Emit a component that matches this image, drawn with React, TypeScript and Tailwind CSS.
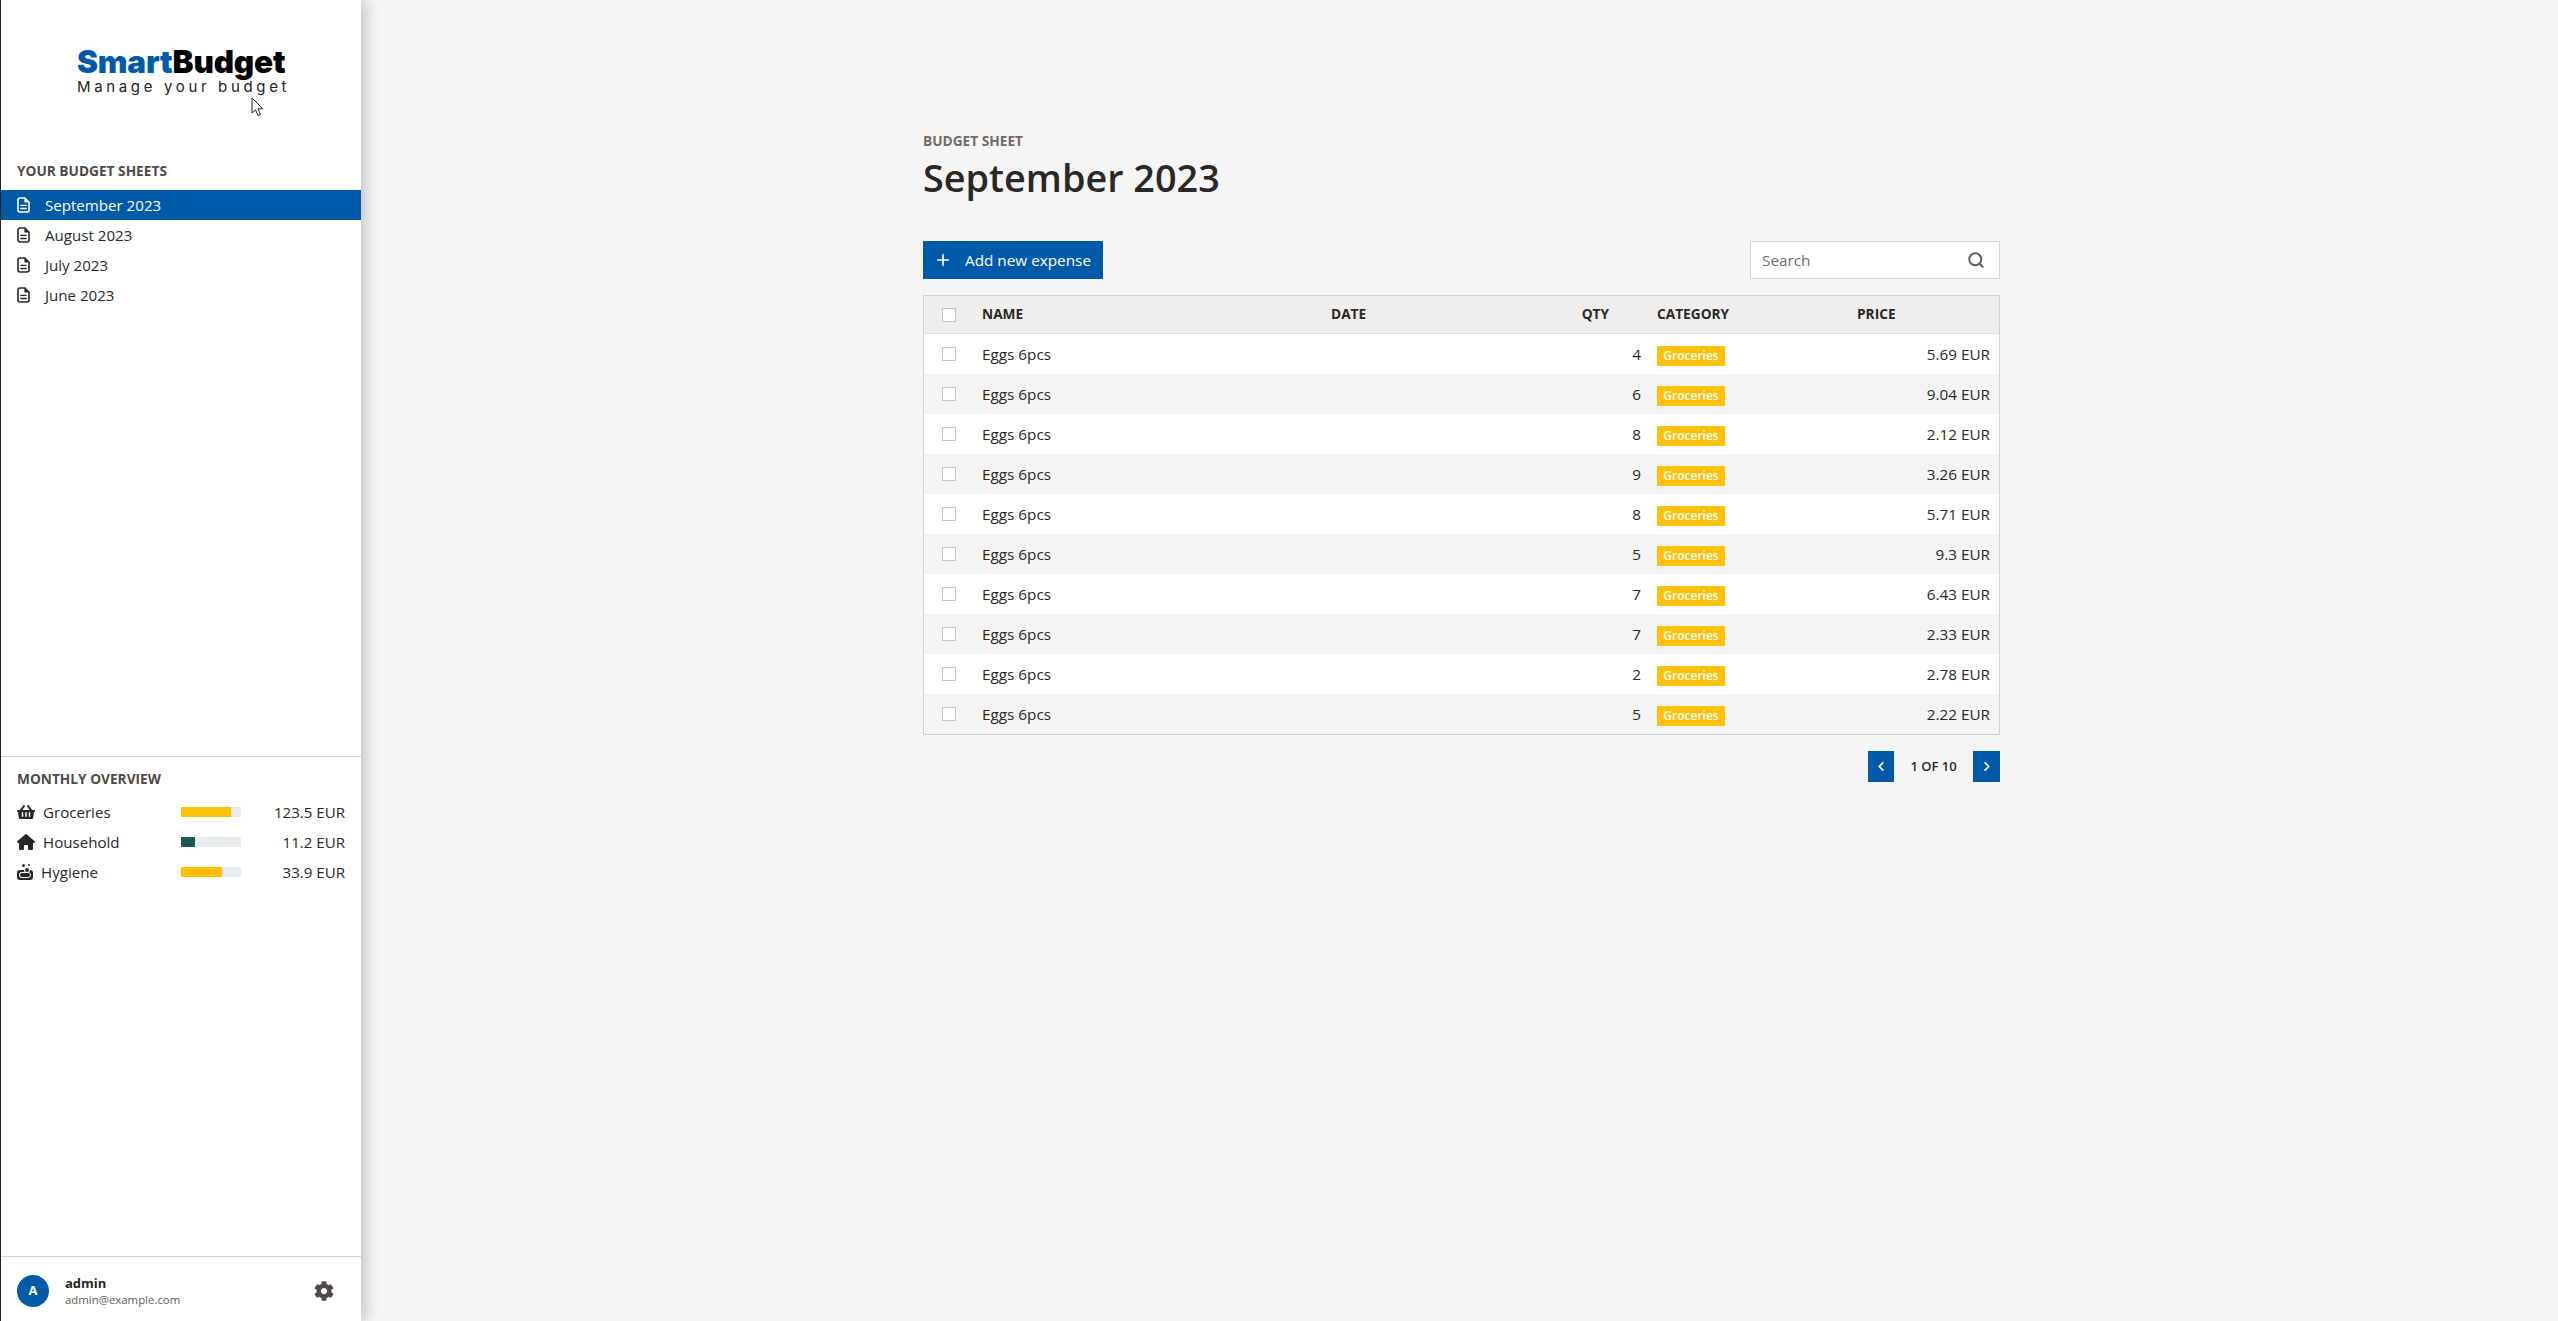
import React from "react";
import { FaShoppingBasket, FaSoap, FaCog, FaChevronLeft, FaChevronRight } from "react-icons/fa";
import { FaHouse } from "react-icons/fa6";
import { Search, Plus } from "lucide-react";

const sheets = ["September 2023", "August 2023", "July 2023", "June 2023"];
const overview = [
  { icon: <FaShoppingBasket className="w-[18px] h-[16px]" />, label: "Groceries", gap: "ml-[8px]", pct: 83, color: "bg-[#ffc107]", value: "123.5 EUR" },
  { icon: <FaHouse className="w-[18px] h-[16px]" />, label: "Household", gap: "ml-[8px]", pct: 23, color: "bg-[#1f5753]", value: "11.2 EUR" },
  { icon: <FaSoap className="w-[16px] h-[16px]" />, label: "Hygiene", gap: "ml-[8px]", pct: 68, color: "bg-[#ffc107]", value: "33.9 EUR" },
];
const rows: [number, string][] = [
  [4, "5.69 EUR"], [6, "9.04 EUR"], [8, "2.12 EUR"], [9, "3.26 EUR"], [8, "5.71 EUR"],
  [5, "9.3 EUR"], [7, "6.43 EUR"], [7, "2.33 EUR"], [2, "2.78 EUR"], [5, "2.22 EUR"],
];
const cols = "grid grid-cols-[58px_349px_200px_126px_200px_1fr] items-center";
const font = { fontFamily: '"Open Sans", "Noto Sans", sans-serif' };

function Box() {
  return <span className="block w-[14px] h-[14px] border border-[#c8c6c4] bg-white" />;
}

function DocIcon() {
  return (
    <svg className="mr-[15px] shrink-0" width="13" height="16" viewBox="0 0 13 16" fill="none" stroke="currentColor" strokeWidth="1.6" strokeLinejoin="round" strokeLinecap="round">
      <path d="M3 1 H7.8 L12 5.2 V13 A2 2 0 0 1 10 15 H3 A2 2 0 0 1 1 13 V3 A2 2 0 0 1 3 1 Z" />
      <path d="M8 1.2 V5 H11.8" fill="currentColor" strokeWidth="1.2" />
      <path d="M3.8 8.3 H9.2 M3.8 11.5 H9.2" strokeWidth="1.3" />
    </svg>
  );
}

export default function App() {
  return (
    <div className="flex w-full h-[1321px] bg-[#f5f5f5] text-[#292827] overflow-hidden relative" style={font}>
      <aside className="w-[361px] shrink-0 h-full flex flex-col bg-white border-l border-l-[#222] shadow-[4px_0_14px_rgba(0,0,0,0.22)] z-10">
        <div className="h-[156px] pt-[46px] pl-[76px] shrink-0">
          <div className="text-[31.5px] leading-[32px] font-black tracking-[-0.2px] text-black" style={{ fontFamily: "Inter, sans-serif" }}>
            <span className="text-[#005aa7]">Smart</span>Budget
          </div>
          <div className="text-[15px] leading-[18px] tracking-[3.65px] text-[#222]" style={{ fontFamily: "Inter, sans-serif" }}>
            Manage your budget
          </div>
        </div>
        <h2 className="h-[34px] pl-[16px] text-[13.7px] leading-[30px] font-bold text-[#4f4a47]">YOUR BUDGET SHEETS</h2>
        <ul className="flex-1">
          {sheets.map((s, i) => (
            <li key={s} className={`h-[30px] flex items-center pl-[16px] text-[15.1px] ${i === 0 ? "bg-[#005aa7] text-white" : "text-[#292827]"}`}>
              <DocIcon />
              {s}
            </li>
          ))}
        </ul>
        <section className="h-[500px] shrink-0 border-t border-[#d2d2d2] pt-[10px] px-[16px]">
          <h2 className="h-[30px] text-[13.7px] leading-[24px] font-bold text-[#4f4a47]">MONTHLY OVERVIEW</h2>
          {overview.map((o) => (
            <div key={o.label} className="h-[30px] flex items-center text-[15.1px]">
              <div className="w-[164px] flex items-center">
                {o.icon}
                <span className={o.gap}>{o.label}</span>
              </div>
              <div className="w-[60px] h-[10px] bg-[#e9ecef]">
                <div className={`h-full ${o.color}`} style={{ width: `${o.pct}%` }} />
              </div>
              <span className="flex-1 text-right">{o.value}</span>
            </div>
          ))}
        </section>
        <footer className="h-[65px] shrink-0 border-t border-[#d2d2d2] flex items-center pl-[16px] pr-[27px] pt-[3px]">
          <div className="w-[32px] h-[32px] rounded-full bg-[#005aa7] text-white flex items-center justify-center text-[13px] font-bold">A</div>
          <div className="ml-[16px] flex-1 flex flex-col">
            <span className="text-[13px] leading-[18px] font-bold">admin</span>
            <span className="text-[11.4px] leading-[16px] text-[#5f5a57]">admin@example.com</span>
          </div>
          <FaCog className="w-[20px] h-[20px] text-[#4f4a47]" />
        </footer>
      </aside>
      <main className="flex-1 pl-[562px] pt-[132px]">
        <div className="w-[1077px]">
          <div className="text-[13.7px] leading-[17px] font-bold text-[#6f6a67]">BUDGET SHEET</div>
          <h1 className="mt-[2px] text-[37.8px] leading-[54px] font-semibold text-[#292827]">September 2023</h1>
          <div className="mt-[36px] flex justify-between items-center">
            <button className="h-[38px] w-[180px] bg-[#005aa7] text-white flex items-center pl-[11px] text-[15.3px]">
              <Plus className="w-[18px] h-[18px] mr-[13px]" strokeWidth={2.2} />
              Add new expense
            </button>
            <div className="w-[250px] h-[38px] bg-white border border-[#cfd4da] flex items-center justify-between pl-[11px] pr-[14px] text-[15.3px] text-[#6f6a67]">
              <span>Search</span>
              <Search className="w-[18px] h-[18px] text-[#605e5c]" strokeWidth={2.6} />
            </div>
          </div>
          <div className="mt-[16px] border border-[#d2d2d2]">
            <div className={`${cols} h-[38px] bg-[#efeeec] border-b border-[#dfe1e5] text-[13.7px] font-bold`}>
              <div className="pl-[18px]"><Box /></div>
              <div>NAME</div>
              <div>DATE</div>
              <div className="text-right pr-[48px]">QTY</div>
              <div>CATEGORY</div>
              <div>PRICE</div>
            </div>
            {rows.map(([q, p], i) => (
              <div key={i} className={`${cols} h-[40px] text-[15.3px] ${i % 2 ? "bg-[#f4f4f4]" : "bg-white"}`}>
                <div className="pl-[18px]"><Box /></div>
                <div>Eggs 6pcs</div>
                <div />
                <div className="text-right pr-[16px]">{q}</div>
                <div>
                  <span className="inline-flex items-center justify-center w-[68px] h-[20px] bg-[#ffc107] text-white text-[12px] font-semibold">Groceries</span>
                </div>
                <div className="text-right pr-[9px]">{p}</div>
              </div>
            ))}
          </div>
          <div className="mt-[16px] flex justify-end items-center">
            <button className="w-[26px] h-[31px] bg-[#005aa7] text-white flex items-center justify-center"><FaChevronLeft className="w-[10px] h-[11px]" /></button>
            <span className="w-[79px] text-center text-[13px] font-semibold">1 OF 10</span>
            <button className="w-[27px] h-[31px] bg-[#005aa7] text-white flex items-center justify-center"><FaChevronRight className="w-[10px] h-[11px]" /></button>
          </div>
        </div>
      </main>
      <svg className="absolute left-[251px] top-[97px] z-20" width="13" height="20" viewBox="0 0 13 20">
        <path d="M1 1 L1 16 L4.5 12.8 L7 18.5 L9.5 17.4 L7 11.8 L11.8 11.8 Z" fill="#fff" stroke="#222" strokeWidth="1" />
      </svg>
    </div>
  );
}
